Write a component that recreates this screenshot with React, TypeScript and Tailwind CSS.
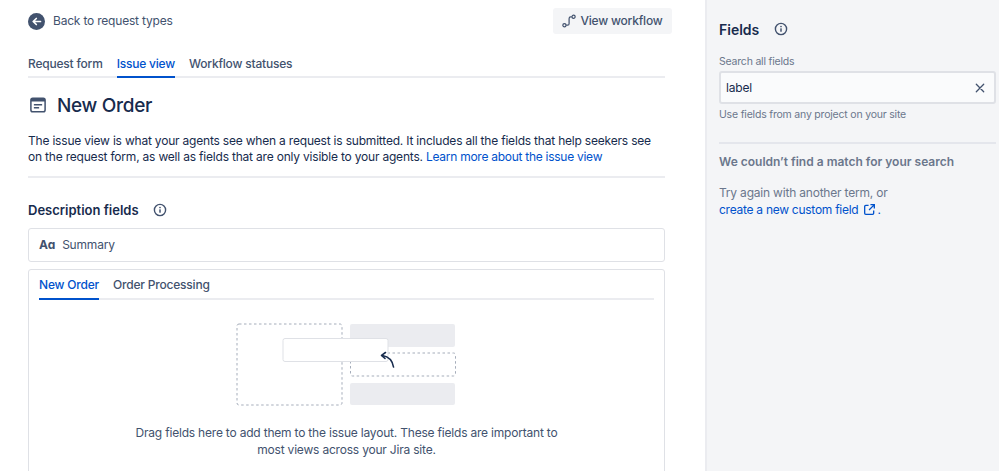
function InfoIcon({ className }: { className?: string }) {
  return (
    <svg viewBox="0 0 14 14" fill="none" className={className}>
      <circle cx="7" cy="7" r="5.6" stroke="currentColor" strokeWidth="1.4" />
      <rect x="6.25" y="6.2" width="1.5" height="3.6" rx="0.5" fill="currentColor" />
      <circle cx="7" cy="4.5" r="0.85" fill="currentColor" />
    </svg>
  );
}

function Illustration() {
  return (
    <svg width="222" height="86" viewBox="0 0 222 86" fill="none">
      <rect x="1" y="1" width="105" height="81" rx="2" stroke="#a5adba" strokeDasharray="2.5 2.5" />
      <rect x="114" y="1" width="105" height="23" rx="2" fill="#ebecf0" />
      <rect x="114.5" y="30" width="105" height="23" rx="2" stroke="#a5adba" strokeDasharray="2.5 2.5" />
      <rect x="114" y="60" width="105" height="22" rx="2" fill="#ebecf0" />
      <rect x="47" y="15.5" width="105" height="23" rx="2" fill="#ffffff" stroke="#dfe1e6" />
      <path d="M157.500 44 C156.500 37.500 152 33.500 146.500 32.500" stroke="#172b4d" strokeWidth="1.6" strokeLinecap="round" />
      <path d="M149.500 29.500 L145.500 32.300 L149 35.500" stroke="#172b4d" strokeWidth="1.6" strokeLinecap="round" strokeLinejoin="round" />
    </svg>
  );
}

export default function App() {
  return (
    <div className="flex h-[471px] w-[999px] overflow-hidden bg-white font-['Inter',sans-serif] text-[12px] tracking-[-0.2px] text-[#172b4d]">
      <main className="w-[705px] shrink-0 pl-7">
        <div className="flex h-[42px] w-[644px] items-start justify-between pt-2">
          <div className="flex h-[26px] items-center gap-2 text-[#42526e]">
            <svg viewBox="0 0 17 17" className="h-[17px] w-[17px]">
              <circle cx="8.500" cy="8.500" r="8.500" fill="#42526e" />
              <path d="M12.500 8.500H5.500M8.300 5.500 5.200 8.500l3.100 3" stroke="#fff" strokeWidth="1.700" fill="none" strokeLinecap="round" strokeLinejoin="round" />
            </svg>
            <span>Back to request types</span>
          </div>
          <button className="flex h-[26px] w-[119px] items-center justify-center gap-1 rounded-[3px] bg-[#f4f5f7] font-medium text-[#42526e]">
            <svg viewBox="0 0 15 15" fill="none" className="h-[14px] w-[14px]">
              <circle cx="2.600" cy="12" r="1.700" stroke="currentColor" strokeWidth="1.300" />
              <circle cx="12.400" cy="3" r="1.700" stroke="currentColor" strokeWidth="1.300" />
              <path d="M4.400 12H6c1 0 1.600-.6 1.600-1.600V5c0-1 .6-2 1.700-2h1.200" stroke="currentColor" strokeWidth="1.300" />
            </svg>
            View workflow
          </button>
        </div>

        <nav className="flex w-[637px] gap-[14px] border-b-2 border-[#ebecf0] font-medium text-[#42526e]">
          <span className="h-[34px] pt-[14px] leading-4">Request form</span>
          <span className="-mb-0.5 h-9 border-b-2 border-[#0052cc] pt-[14px] leading-4 text-[#0052cc]">Issue view</span>
          <span className="h-[34px] pt-[14px] leading-4">Workflow statuses</span>
        </nav>

        <div className="flex h-[54px] w-[637px] items-center gap-[11px] pl-[2px]">
          <svg viewBox="0 0 16 16" fill="none" className="h-4 w-4 text-[#42526e]">
            <rect x="0.900" y="1.200" width="14.200" height="13.600" rx="1.800" stroke="currentColor" strokeWidth="1.500" />
            <rect x="1" y="1.500" width="14" height="3" fill="currentColor" />
            <rect x="3.800" y="7" width="8.400" height="1.500" rx="0.500" fill="currentColor" />
            <rect x="3.800" y="10" width="5.400" height="1.500" rx="0.500" fill="currentColor" />
          </svg>
          <h1 className="mt-[2px] text-[19px] leading-6 font-medium tracking-[-0.3px]">New Order</h1>
        </div>

        <p className="w-[637px] border-b-2 border-[#ebecf0] pt-[1px] pb-[11px] leading-4">
          The issue view is what your agents see when a request is submitted. It includes all the fields that help seekers see on the request form, as well as fields that are only visible to your agents.{' '}
          <a className="tracking-[-0.27px] text-[#0052cc]">Learn more about the issue view</a>
        </p>

        <div className="flex h-[50px] items-center gap-[14px] pt-[15px] pb-[1px]">
          <h2 className="text-[13px] leading-5 font-semibold tracking-normal">Description fields</h2>
          <InfoIcon className="h-[14px] w-[14px] text-[#42526e]" />
        </div>

        <div className="flex h-[34px] w-[637px] items-center gap-[7px] rounded-[3px] border border-[#dfe1e6] pl-[10px] text-[#42526e]">
          <span className="text-[12px] font-bold">Aɑ</span>
          <span>Summary</span>
        </div>

        <section className="mt-[7px] h-[240px] w-[637px] rounded-[3px] border border-[#dfe1e6] px-[10px]">
          <div className="flex gap-[14px] border-b-2 border-[#ebecf0] font-medium text-[#42526e]">
            <span className="-mb-0.5 h-[30px] border-b-2 border-[#0052cc] pt-[7px] leading-4 text-[#0052cc]">New Order</span>
            <span className="h-[28px] pt-[7px] leading-4">Order Processing</span>
          </div>
          <div className="flex justify-center pt-[23px] pl-[1px]">
            <Illustration />
          </div>
          <p className="mx-auto mt-[15px] w-[440px] text-center leading-[17px] text-[#42526e]">
            Drag fields here to add them to the issue layout. These fields are important to most views across your Jira site.
          </p>
        </section>
      </main>

      <aside className="flex-1 border-l-2 border-[#ebecf0] bg-[#f4f5f7] pt-[19px] pl-[12px]">
        <div className="flex h-5 items-center gap-[15px]">
          <h2 className="text-[14px] font-semibold tracking-normal">Fields</h2>
          <InfoIcon className="h-[14px] w-[14px] text-[#42526e]" />
        </div>
        <label className="mt-[15px] block text-[10.500px] leading-[16px] text-[#6b778c]">Search all fields</label>
        <div className="mt-[1px] flex h-[33px] w-[277px] items-center justify-between rounded-[3px] border-2 border-[#dfe1e6] bg-[#fafbfc] pr-[9px] pl-[5px]">
          <span>label</span>
          <svg viewBox="0 0 10 10" className="h-[10px] w-[10px] text-[#42526e]" fill="none">
            <path d="M1.300 1.300l7.400 7.400M8.700 1.300 1.300 8.700" stroke="currentColor" strokeWidth="1.300" strokeLinecap="round" />
          </svg>
        </div>
        <p className="mt-[3px] text-[10.500px] leading-4 text-[#6b778c]">Use fields from any project on your site</p>
        <div className="mt-[19px] h-0.5 w-[277px] bg-[#e4e6ec]" />
        <h3 className="mt-[10px] text-[12px] leading-4 font-semibold tracking-normal text-[#6b778c]">We couldn’t find a match for your search</h3>
        <p className="mt-[14px] leading-[17px] text-[#6b778c]">
          Try again with another term, or
          <br />
          <a className="tracking-[-0.27px] text-[#0052cc]">
            create a new custom field
            <svg viewBox="0 0 14 14" fill="none" className="mr-[1px] ml-[5px] inline-block h-[13px] w-[13px] align-[-2px]">
              <path d="M6 2.500H3A1.200 1.200 0 0 0 1.800 3.700v7.300A1.200 1.200 0 0 0 3 12.200h7.300A1.200 1.200 0 0 0 11.500 11V8M8 1.800h4.200V6M12 2 6.500 7.500" stroke="currentColor" strokeWidth="1.400" />
            </svg>
            .
          </a>
        </p>
      </aside>
    </div>
  );
}
